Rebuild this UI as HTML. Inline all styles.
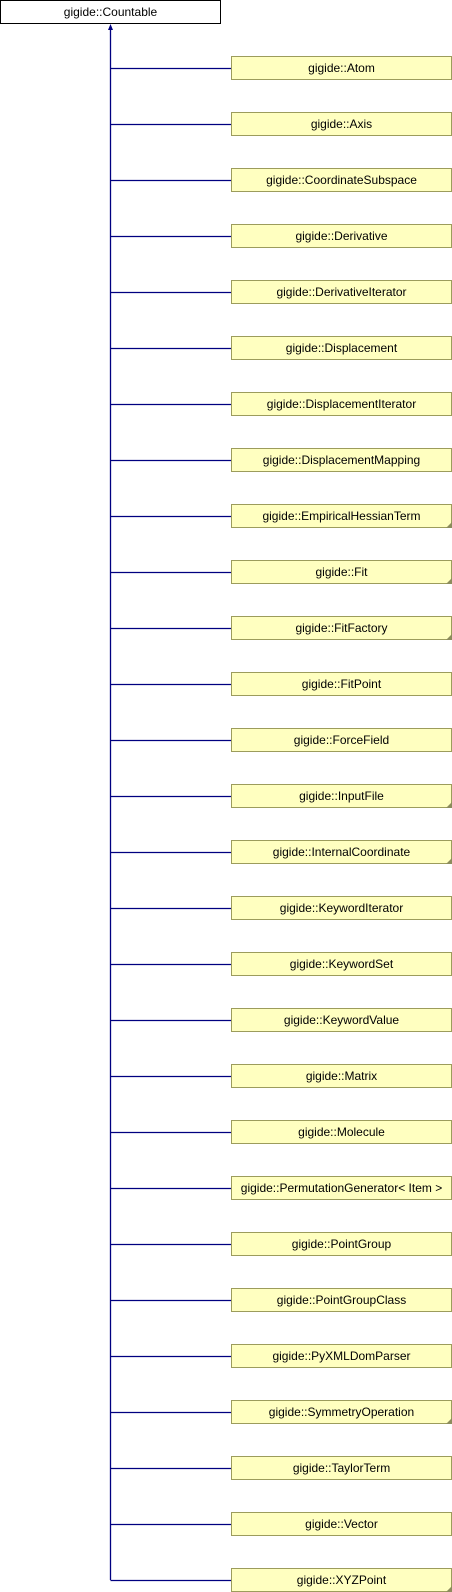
<!DOCTYPE html>
<html><head><meta charset="utf-8"><style>body{margin:0;background:#fff}svg{display:block}text{font-family:"Liberation Sans",sans-serif;font-size:12px}</style></head><body>
<svg width="452" height="1592" xmlns="http://www.w3.org/2000/svg" id="s">
<rect x="0.5" y="0.5" width="220" height="23" fill="#fff" stroke="#000"/>
<text x="110.5" y="16" text-anchor="middle">gigide::Countable</text>
<line x1="110.5" y1="28" x2="110.5" y2="1580" stroke="#000080" stroke-width="1.3"/>
<polygon points="110.5,24 108,30 113,30" fill="#000080"/>
</svg>
<script>
var names=["Atom","Axis","CoordinateSubspace","Derivative","DerivativeIterator","Displacement","DisplacementIterator","DisplacementMapping","EmpiricalHessianTerm","Fit","FitFactory","FitPoint","ForceField","InputFile","InternalCoordinate","KeywordIterator","KeywordSet","KeywordValue","Matrix","Molecule","PermutationGenerator< Item >","PointGroup","PointGroupClass","PyXMLDomParser","SymmetryOperation","TaylorTerm","Vector","XYZPoint"];
var fold={EmpiricalHessianTerm:1,Fit:1,FitFactory:1,InputFile:1,InternalCoordinate:1,SymmetryOperation:1,XYZPoint:1};
var s=document.getElementById('s'),h='';
names.forEach(function(n,i){var y=56+i*56;
h+='<line x1="110.5" y1="'+(y+12.5)+'" x2="231" y2="'+(y+12.5)+'" stroke="#000080" stroke-width="1.3"/>';
h+='<rect x="231.5" y="'+(y+0.5)+'" width="220" height="23" fill="#ffffc0" stroke="#9c9c5c"/>';
if(fold[n])h+='<polygon points="452,'+(y+18)+' 452,'+(y+24)+' 446,'+(y+24)+'" fill="#8c8c5c"/>';
h+='<text x="341.5" y="'+(y+16)+'" text-anchor="middle">gigide::'+n.replace('<','&lt;').replace('>','&gt;')+'</text>';});
s.insertAdjacentHTML('beforeend',h);
</script>
</body></html>
